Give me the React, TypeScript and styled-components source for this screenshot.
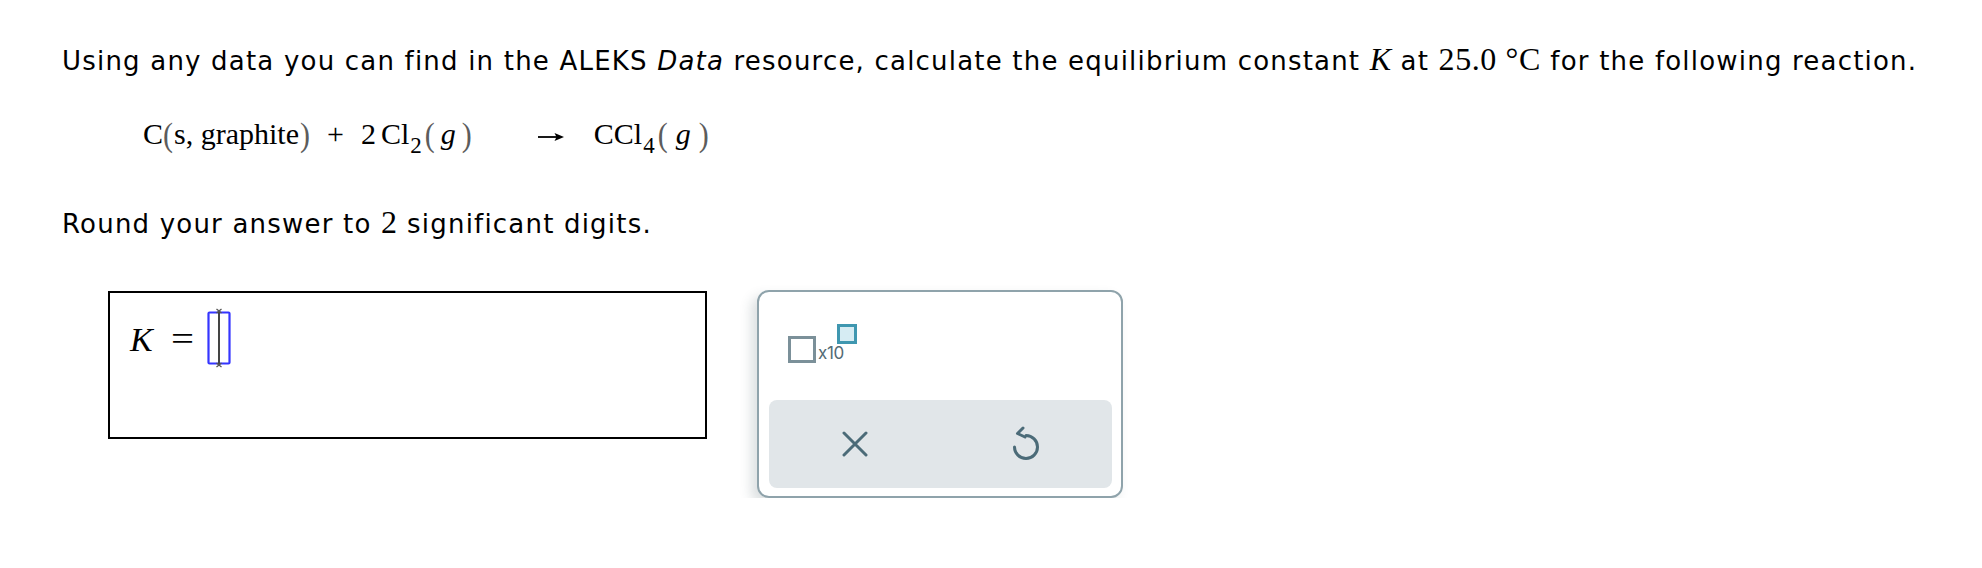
import React from "react";
import styled, { createGlobalStyle } from "styled-components";

/** ===========================================================================
 * Question page: equilibrium constant prompt with answer box and keypad
 * ============================================================================
 */

const GlobalStyle = createGlobalStyle`
  body {
    margin: 0;
    background: #ffffff;
    color: #000000;
    font-family: "DejaVu Sans", Verdana, sans-serif;
    font-variant-ligatures: none;
  }
`;

const App: React.FC = () => {
  return (
    <>
      <GlobalStyle />
      <Page>
        <Prompt>
          Using any data you can find in the ALEKS <em>Data</em> resource,
          calculate the equilibrium constant <MathVar>K</MathVar> at{" "}
          <MathNum>25.0 °C</MathNum> for the following reaction.
        </Prompt>

        <Reaction>
          <Sym>C</Sym>
          <Paren>(</Paren>
          <Sym $pad={1}>s, graphite</Sym>
          <Paren>)</Paren>
          <Op>+</Op>
          <Sym $gap={1}>2</Sym>
          <Sym $gap={5}>Cl</Sym>
          <Sub>2</Sub>
          <Paren>(</Paren>
          <Sym $italic $pad={6}>g</Sym>
          <Paren>)</Paren>
          <Arrow />
          <Sym>CCl</Sym>
          <Sub>4</Sub>
          <Paren>(</Paren>
          <Sym $italic $pad={8}>g</Sym>
          <Paren>)</Paren>
        </Reaction>

        <Prompt $top={55}>
          Round your answer to <MathNum>2</MathNum> significant digits.
        </Prompt>

        <AnswerRow>
          <AnswerBox>
            <AnswerLine>
              <AnswerVar>K</AnswerVar>
              <Equals>=</Equals>
              <Cursor />
            </AnswerLine>
          </AnswerBox>

          <Keypad>
            <TemplateArea>
              <Template>
                <BaseSlot />
                <TimesTen>x10</TimesTen>
                <ExponentSlot />
              </Template>
            </TemplateArea>
            <ActionBar>
              <ActionButton aria-label="clear">
                <ClearIcon />
              </ActionButton>
              <ActionButton aria-label="undo">
                <UndoIcon />
              </ActionButton>
            </ActionBar>
          </Keypad>
        </AnswerRow>
      </Page>
    </>
  );
};

/** ===========================================================================
 * Icons
 * ============================================================================
 */

const Arrow = () => (
  <ArrowSvg width="26" height="10" viewBox="0 0 26 10">
    <line x1="0" y1="5" x2="19" y2="5" stroke="#000" strokeWidth="1.8" />
    <path d="M26 5 L16.5 1 L18.5 5 L16.5 9 Z" fill="#000" />
  </ArrowSvg>
);

const Cursor = () => (
  <CursorSvg width="26" height="60" viewBox="0 0 26 60">
    <rect
      x="2.5"
      y="4.5"
      width="21"
      height="51"
      rx="1"
      fill="none"
      stroke="#3535ff"
      strokeWidth="2.2"
    />
    <line x1="13" y1="2" x2="13" y2="58" stroke="#444" strokeWidth="2" />
    <path
      d="M10.5 1 L15.5 5 M15.5 1 L10.5 5 M10.5 55 L15.5 59 M15.5 55 L10.5 59"
      stroke="#555"
      strokeWidth="1.3"
    />
  </CursorSvg>
);

const ClearIcon = () => (
  <svg width="26" height="26" viewBox="0 0 26 26">
    <path
      d="M2 2 L24 24 M24 2 L2 24"
      stroke="#4b6b78"
      strokeWidth="3"
      strokeLinecap="round"
    />
  </svg>
);

const UndoIcon = () => (
  <svg width="28" height="36" viewBox="0 0 28 36">
    <path
      d="M2.5 21 A11.5 11.5 0 1 0 14 9.5"
      fill="none"
      stroke="#4b6b78"
      strokeWidth="3"
      strokeLinecap="round"
    />
    <path
      d="M11 2 L5.5 7.5 L13 11"
      fill="none"
      stroke="#4b6b78"
      strokeWidth="3"
      strokeLinecap="round"
      strokeLinejoin="round"
    />
  </svg>
);

/** ===========================================================================
 * Styled Components
 * ============================================================================
 */

const Page = styled.div`
  padding: 46px 0 0 62px;
`;

const Prompt = styled.p<{ $top?: number }>`
  margin: ${(p) => p.$top ?? 0}px 0 0;
  font-size: 26px;
  line-height: 30px;
  letter-spacing: 1.2px;
  white-space: nowrap;

  em {
    font-style: italic;
  }
`;

const MathVar = styled.span`
  font-family: "Liberation Serif", "Times New Roman", serif;
  font-style: italic;
  font-size: 32px;
  line-height: 0;
  letter-spacing: 0;
`;

const MathNum = styled.span`
  font-family: "Liberation Serif", "Times New Roman", serif;
  font-size: 32px;
  line-height: 0;
  letter-spacing: 0.6px;
`;

const Reaction = styled.div`
  display: flex;
  align-items: baseline;
  margin: 38px 0 0 81px;
  height: 40px;
  font-family: "Liberation Serif", "Times New Roman", serif;
  font-size: 30px;
  line-height: 40px;
`;

const Sym = styled.span<{ $italic?: boolean; $gap?: number; $pad?: number }>`
  font-style: ${(p) => (p.$italic ? "italic" : "normal")};
  margin-left: ${(p) => p.$gap ?? 0}px;
  padding: 0 ${(p) => p.$pad ?? 0}px;
`;

const Paren = styled.span`
  display: inline-block;
  color: #5c5c5c;
  transform: scaleY(1.15);
`;

const Sub = styled.span`
  font-size: 23px;
  position: relative;
  top: 9px;
  margin: 0 3px 0 1px;
`;

const Op = styled.span`
  margin: 0 16px 0 17px;
`;

const ArrowSvg = styled.svg`
  margin: 0 30px 0 66px;
  align-self: center;
  position: relative;
  top: 3px;
`;

const AnswerRow = styled.div`
  display: flex;
  align-items: flex-start;
  gap: 50px;
  margin: 51px 0 0 46px;
`;

const AnswerBox = styled.div`
  box-sizing: border-box;
  width: 599px;
  height: 148px;
  margin-top: 1px;
  border: 2px solid #000;
  padding: 19px 0 0 20px;
`;

const AnswerLine = styled.div`
  display: flex;
  align-items: center;
  height: 52px;
  font-family: "Liberation Serif", "Times New Roman", serif;
`;

const AnswerVar = styled.span`
  font-style: italic;
  font-size: 34px;
  line-height: 1;
  position: relative;
  top: 2px;
`;

const Equals = styled.span`
  display: inline-block;
  font-size: 34px;
  line-height: 1;
  margin: 0 14px 0 20px;
  transform: scaleX(1.2);
  position: relative;
  top: 1px;
`;

const CursorSvg = styled.svg`
  display: block;
`;

const Keypad = styled.div`
  box-sizing: border-box;
  width: 366px;
  height: 208px;
  border: 2px solid #8fa3ab;
  border-radius: 12px;
  background: #ffffff;
  box-shadow: -6px 6px 12px rgba(50, 70, 80, 0.17);
  padding: 0 9px 8px 10px;
  display: flex;
  flex-direction: column;
`;

const TemplateArea = styled.div`
  height: 108px;
  padding: 32px 0 0 19px;
  box-sizing: border-box;
`;

const Template = styled.div`
  display: inline-flex;
  align-items: flex-start;
  cursor: pointer;
`;

const BaseSlot = styled.div`
  box-sizing: border-box;
  width: 28px;
  height: 27px;
  margin-top: 12px;
  border: 3px solid #7b9099;
`;

const TimesTen = styled.span`
  margin: 21px 0 0 2px;
  font-family: Inter, "Open Sans", sans-serif;
  font-size: 17px;
  line-height: 16px;
  color: #536a74;
  letter-spacing: -0.4px;
`;

const ExponentSlot = styled.div`
  box-sizing: border-box;
  width: 20px;
  height: 20px;
  margin-left: -7px;
  border: 3px solid #3f97b0;
  background: #d6ecf3;
`;

const ActionBar = styled.div`
  flex: 1;
  display: flex;
  background: #e1e6e9;
  border-radius: 8px;
`;

const ActionButton = styled.button`
  flex: 1;
  display: flex;
  align-items: center;
  justify-content: center;
  border: none;
  background: transparent;
  padding: 0;
  cursor: pointer;
`;

export default App;
